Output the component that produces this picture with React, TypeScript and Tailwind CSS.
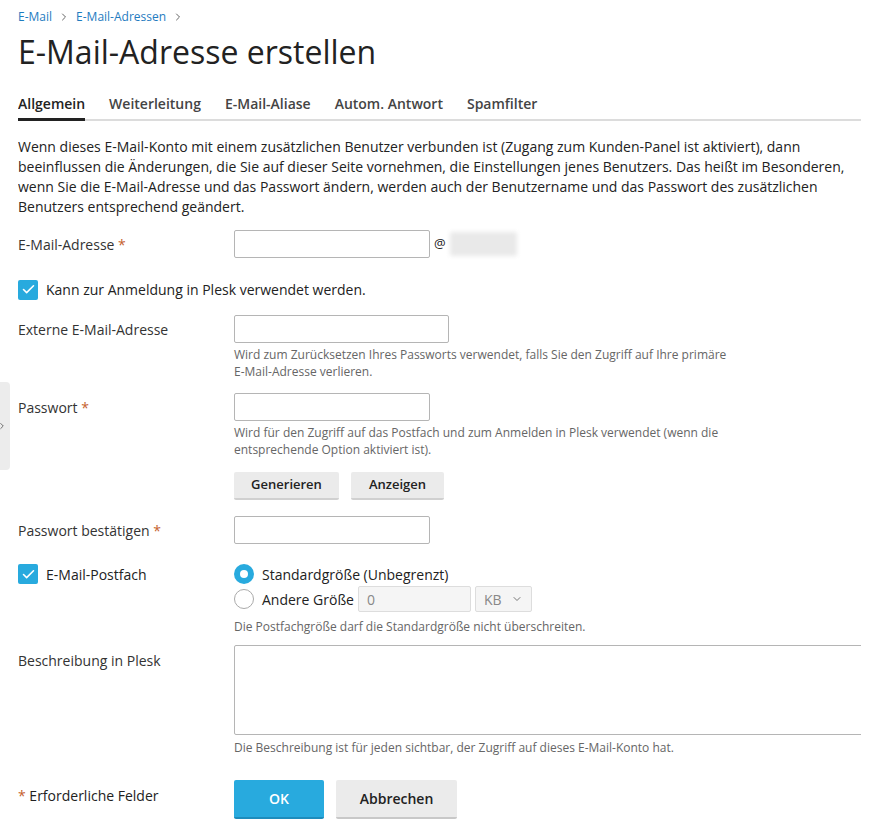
import { ChevronRight, Check, ChevronDown } from 'lucide-react';

const LABEL = 'w-[216px] shrink-0 text-[14px] text-[#333]';
const INPUT = 'h-[28px] rounded-[2px] border border-[#b5b5b5] bg-white px-2 text-[14px] outline-none';
const HINT = 'text-[12px] leading-[17px] text-[#666]';
const GREY_BTN = 'h-[28px] rounded-[2px] border-b-2 border-[#d0d0d0] bg-[#ebebeb] text-[13px] font-semibold text-[#222]';

function Req() {
  return <span className="text-[#c5612d]"> *</span>;
}

function CheckBox() {
  return (
    <span className="flex h-[20px] w-[20px] shrink-0 items-center justify-center rounded-[2px] bg-[#28aade]">
      <Check size={15} strokeWidth={2.5} className="text-white" />
    </span>
  );
}

const TABS = ['Allgemein', 'Weiterleitung', 'E-Mail-Aliase', 'Autom. Antwort', 'Spamfilter'];

export default function App() {
  return (
    <div className="relative min-h-[832px] bg-white font-['Open_Sans',sans-serif] text-[#222]">
      {/* left collapsed sidebar handle */}
      <div className="absolute left-0 top-[382px] flex h-[88px] w-[10px] items-center justify-start rounded-r-[4px] bg-[#ececec]">
        <ChevronRight size={10} strokeWidth={2} className="-ml-[3px] text-[#555]" />
      </div>

      <div className="ml-[18px] mr-[12px] overflow-hidden pt-[8px]">
        {/* breadcrumbs */}
        <div className="flex items-center gap-[4px] text-[12px] text-[#1f7cbf]">
          <span>E-Mail</span>
          <ChevronRight size={12} className="mx-[2px] text-[#666]" />
          <span>E-Mail-Adressen</span>
          <ChevronRight size={12} className="mx-[2px] text-[#666]" />
        </div>

        <h1 className="mt-[6px] text-[32px] leading-[40px] font-normal text-[#222]">E-Mail-Adresse erstellen</h1>

        {/* tabs */}
        <div className="mt-[21px] flex gap-[24px] border-b-2 border-[#dcdcdc]">
          {TABS.map((t, i) => (
            <div
              key={t}
              className={
                i === 0
                  ? '-mb-[2px] border-b-[3px] border-[#222] pb-[4px] text-[14px] font-semibold text-[#222]'
                  : 'pb-[5px] text-[14px] font-semibold text-[#444]'
              }
            >
              {t}
            </div>
          ))}
        </div>

        <p className="mt-[16px] pr-[4px] text-[14px] leading-[20px] text-[#222]">
          Wenn dieses E-Mail-Konto mit einem zusätzlichen Benutzer verbunden ist (Zugang zum Kunden-Panel ist aktiviert), dann beeinflussen die Änderungen, die Sie auf dieser Seite vornehmen, die Einstellungen jenes Benutzers. Das heißt im Besonderen, wenn Sie die E-Mail-Adresse und das Passwort ändern, werden auch der Benutzername und das Passwort des zusätzlichen Benutzers entsprechend geändert.
        </p>

        {/* E-Mail-Adresse */}
        <div className="mt-[13px] flex items-center">
          <label className={LABEL}>E-Mail-Adresse<Req /></label>
          <input className={`${INPUT} w-[196px]`} />
          <span className="ml-[4px] text-[13px] text-[#222]">@</span>
          <span className="ml-[4px] h-[24px] w-[67px] rounded-[2px] bg-[#e9e9e9] blur-[2px]" />
        </div>

        <div className="mt-[21px] flex items-center gap-[8px]">
          <CheckBox />
          <span className="text-[14px] text-[#222]">Kann zur Anmeldung in Plesk verwendet werden.</span>
        </div>

        {/* Externe E-Mail-Adresse */}
        <div className="mt-[15px] flex">
          <label className={`${LABEL} pt-[4px]`}>Externe E-Mail-Adresse</label>
          <div>
            <input className={`${INPUT} w-[215px]`} />
            <p className={`${HINT} mt-[3px] w-[500px]`}>
              Wird zum Zurücksetzen Ihres Passworts verwendet, falls Sie den Zugriff auf Ihre primäre E-Mail-Adresse verlieren.
            </p>
          </div>
        </div>

        {/* Passwort */}
        <div className="mt-[13px] flex">
          <label className={`${LABEL} pt-[4px]`}>Passwort<Req /></label>
          <div>
            <input type="password" className={`${INPUT} w-[196px]`} />
            <p className={`${HINT} mt-[3px] w-[500px]`}>
              Wird für den Zugriff auf das Postfach und zum Anmelden in Plesk verwendet (wenn die entsprechende Option aktiviert ist).
            </p>
            <div className="mt-[14px] flex gap-[12px]">
              <button className={`${GREY_BTN} w-[105px]`}>Generieren</button>
              <button className={`${GREY_BTN} w-[93px]`}>Anzeigen</button>
            </div>
          </div>
        </div>

        {/* Passwort bestätigen */}
        <div className="mt-[16px] flex items-center">
          <label className={LABEL}>Passwort bestätigen<Req /></label>
          <input type="password" className={`${INPUT} w-[196px]`} />
        </div>

        {/* E-Mail-Postfach */}
        <div className="mt-[20px] flex">
          <div className="flex w-[216px] shrink-0 items-start gap-[8px]">
            <CheckBox />
            <span className="pt-[1px] text-[14px] leading-[20px] text-[#222]">E-Mail-Postfach</span>
          </div>
          <div>
            <div className="flex h-[20px] items-center gap-[8px]">
              <span className="flex h-[20px] w-[20px] items-center justify-center rounded-full bg-[#28aade]">
                <span className="h-[8px] w-[8px] rounded-full bg-white" />
              </span>
              <span className="text-[14px] text-[#222]">Standardgröße (Unbegrenzt)</span>
            </div>
            <div className="mt-[2px] flex items-center">
              <span className="h-[20px] w-[20px] rounded-full border border-[#aaa] bg-white" />
              <span className="ml-[8px] text-[14px] text-[#222]">Andere Größe</span>
              <input
                disabled
                value="0"
                className="ml-[4px] h-[26px] w-[113px] rounded-[2px] border border-[#ddd] bg-[#f5f5f5] px-[8px] text-[14px] text-[#888]"
              />
              <div className="ml-[4px] flex h-[26px] w-[57px] items-center justify-between rounded-[2px] border border-[#ddd] bg-[#f5f5f5] px-[8px] text-[14px] text-[#888]">
                <span>KB</span>
                <ChevronDown size={12} className="text-[#777]" />
              </div>
            </div>
            <p className={`${HINT} mt-[6px]`}>Die Postfachgröße darf die Standardgröße nicht überschreiten.</p>
          </div>
        </div>

        {/* Beschreibung */}
        <div className="mt-[10px] flex">
          <label className={`${LABEL} pt-[5px]`}>Beschreibung in Plesk</label>
          <div className="min-w-0 flex-1">
            <textarea className="block h-[90px] w-[660px] rounded-[2px] border border-[#b5b5b5] bg-white outline-none" />
            <p className={`${HINT} mt-[4px]`}>
              Die Beschreibung ist für jeden sichtbar, der Zugriff auf dieses E-Mail-Konto hat.
            </p>
          </div>
        </div>

        {/* footer */}
        <div className="mt-[24px] flex pb-[14px]">
          <div className="w-[216px] shrink-0 pt-[5px] text-[14px] text-[#222]">
            <span className="text-[#c5612d]">*</span> Erforderliche Felder
          </div>
          <div className="flex gap-[12px]">
            <button className="h-[39px] w-[90px] rounded-[2px] border-b-2 border-[#1d8cbc] bg-[#28aade] text-[14px] font-semibold text-white">
              OK
            </button>
            <button className="h-[39px] w-[121px] rounded-[2px] border-b-2 border-[#c8c8c8] bg-[#ebebeb] text-[14px] font-semibold text-[#222]">
              Abbrechen
            </button>
          </div>
        </div>
      </div>
    </div>
  );
}
